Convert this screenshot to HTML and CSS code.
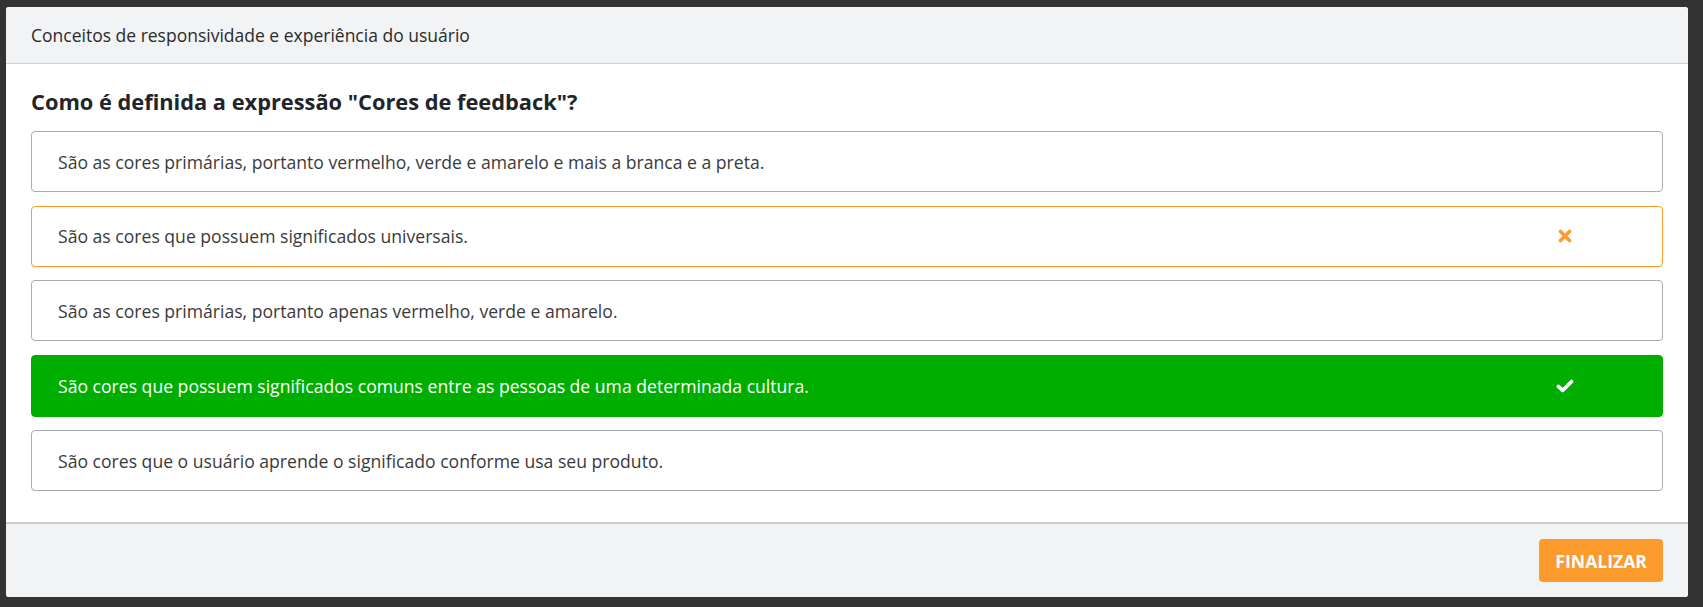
FILE: index.html
```html
<!DOCTYPE html>
<html lang="pt-BR">
<head>
<meta charset="utf-8">
<title>Quiz</title>
<link rel="stylesheet" href="styles.css">
</head>
<body>
<div class="card">
  <div class="card-header">Conceitos de responsividade e experiência do usuário</div>
  <div class="card-body">
    <h2 class="question">Como é definida a expressão "Cores de feedback"?</h2>
    <div class="options">
      <div class="option">
        <span class="option-text">São as cores primárias, portanto vermelho, verde e amarelo e mais a branca e a preta.</span>
      </div>
      <div class="option option-wrong">
        <span class="option-text">São as cores que possuem significados universais.</span>
        <span class="option-icon">
          <svg width="14" height="14" viewBox="0 0 14 14"><path d="M2.5 2.5 L11.5 11.5 M11.5 2.5 L2.5 11.5" stroke="#fc9a2c" stroke-width="3.6" stroke-linecap="round"/></svg>
        </span>
      </div>
      <div class="option">
        <span class="option-text">São as cores primárias, portanto apenas vermelho, verde e amarelo.</span>
      </div>
      <div class="option option-right">
        <span class="option-text">São cores que possuem significados comuns entre as pessoas de uma determinada cultura.</span>
        <span class="option-icon">
          <svg width="18" height="14" viewBox="0 0 18 14"><path d="M2.3 7.4 L6.6 11.4 L15.6 2.4" fill="none" stroke="#ffffff" stroke-width="3.6" stroke-linecap="round" stroke-linejoin="round"/></svg>
        </span>
      </div>
      <div class="option">
        <span class="option-text">São cores que o usuário aprende o significado conforme usa seu produto.</span>
      </div>
    </div>
  </div>
  <div class="card-footer">
    <button class="btn-finish">FINALIZAR</button>
  </div>
</div>
</body>
</html>
```

FILE: styles.css
```css
* { box-sizing: border-box; }
html, body { margin: 0; padding: 0; }
body {
  background: #333333;
  font-family: "Open Sans", "Noto Sans", sans-serif;
  padding: 7px 15px 10px 6px;
}
.card {
  width: 1682px;
  height: 590px;
  background: #ffffff;
  border-radius: 3px;
  overflow: hidden;
  display: flex;
  flex-direction: column;
}
.card-header {
  height: 57px;
  background: #f2f3f5;
  border-bottom: 1px solid #cfd2d6;
  padding-left: 25px;
  display: flex;
  align-items: center;
  font-size: 17.5px;
  color: #2b2b2b;
  padding-bottom: 1px;
}
.card-body {
  flex: 0 0 458px;
  padding: 24px 25px 0 25px;
}
.question {
  margin: 0;
  font-size: 21.8px;
  line-height: 28px;
  font-weight: 700;
  color: #212529;
}
.options {
  margin-top: 15px;
  display: flex;
  flex-direction: column;
  gap: 13.5px;
}
.option {
  height: 61px;
  border: 1px solid #a5acb4;
  border-radius: 4px;
  padding-left: 26px;
  display: flex;
  align-items: center;
  font-size: 17.6px;
  color: #3a3a3a;
}
.option-text { flex: 1; }
.option-wrong {
  border-color: #fc9a2c;
}
.option-right {
  background: #00ae00;
  border-color: #00ae00;
  color: #ffffff;
  height: 62px;
}
.option-icon {
  width: 40px;
  margin-right: 77px;
  display: flex;
  justify-content: center;
  align-items: center;
}
.option-icon svg { display: block; }
.card-footer {
  flex: 1;
  background: #f2f3f5;
  border-top: 2px solid #c9cbcf;
  display: flex;
  justify-content: flex-end;
  align-items: flex-start;
  padding: 15px 25px 0 0;
}
.btn-finish {
  height: 43px;
  padding: 0 16px;
  border: none;
  border-radius: 4px;
  background: #fc9a2c;
  color: #ffffff;
  font-family: "Open Sans", "Noto Sans", sans-serif;
  font-size: 17.6px;
  font-weight: 700;
  cursor: pointer;
}
```
